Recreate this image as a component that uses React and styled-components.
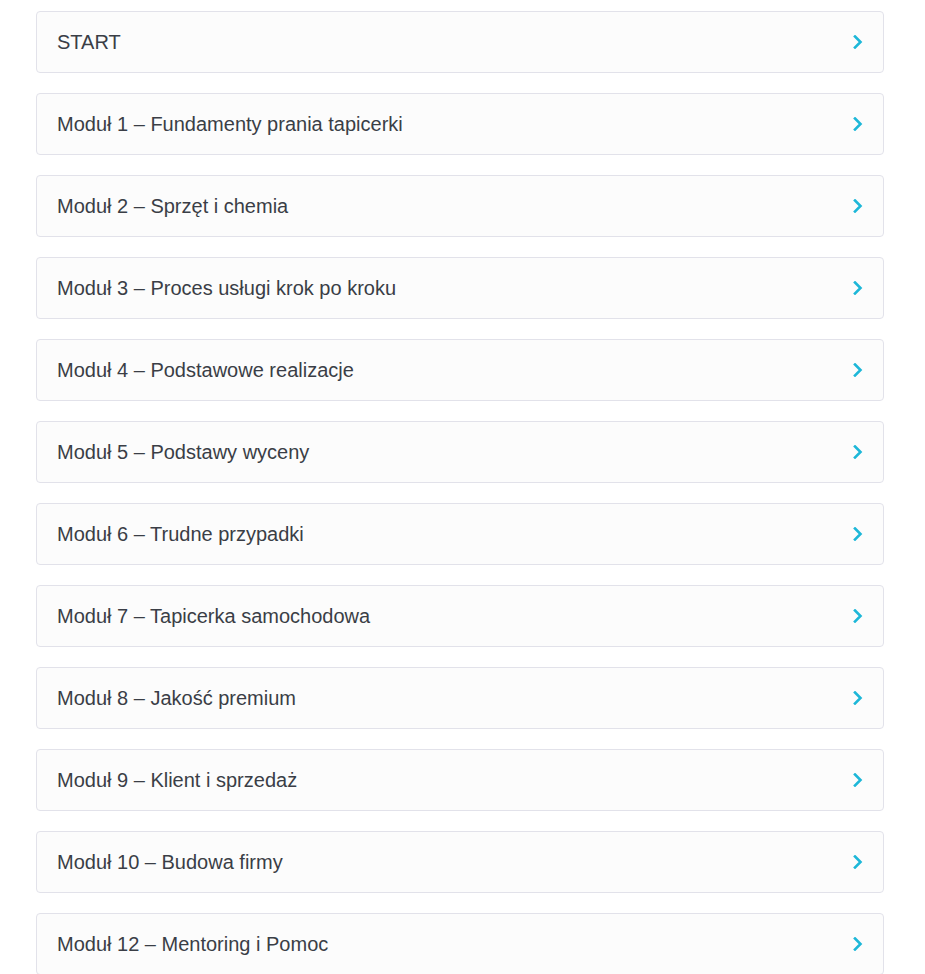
import React from "react";
import styled, { createGlobalStyle } from "styled-components";

const Global = createGlobalStyle`
  html, body { margin: 0; padding: 0; background: #ffffff; }
  body { font-family: "Liberation Sans", Arial, sans-serif; }
`;

const Page = styled.div`
  padding: 11px 41px 0 36px;
  display: flex;
  flex-direction: column;
  gap: 20px;
`;

const Card = styled.div`
  box-sizing: border-box;
  height: 62px;
  display: flex;
  align-items: center;
  justify-content: space-between;
  padding: 0 20px 0 20px;
  background: #fcfcfc;
  border: 1px solid #e2e2ea;
  border-radius: 4px;
  cursor: pointer;
`;

const Title = styled.span`
  font-size: 20px;
  color: #3a3e46;
`;

const Chevron = () => (
  <svg width="10" height="14" viewBox="0 0 10 14" aria-hidden="true">
    <path d="M2 1.5 L7.5 7 L2 12.5" fill="none" stroke="#1db7d8" strokeWidth="2.6" strokeLinecap="square" />
  </svg>
);

const items = [
  "START",
  "Moduł 1 – Fundamenty prania tapicerki",
  "Moduł 2 – Sprzęt i chemia",
  "Moduł 3 – Proces usługi krok po kroku",
  "Moduł 4 – Podstawowe realizacje",
  "Moduł 5 – Podstawy wyceny",
  "Moduł 6 – Trudne przypadki",
  "Moduł 7 – Tapicerka samochodowa",
  "Moduł 8 – Jakość premium",
  "Moduł 9 – Klient i sprzedaż",
  "Moduł 10 – Budowa firmy",
  "Moduł 12 – Mentoring i Pomoc",
];

export default function App() {
  return (
    <>
      <Global />
      <Page>
        {items.map((t) => (
          <Card key={t}>
            <Title>{t}</Title>
            <Chevron />
          </Card>
        ))}
      </Page>
    </>
  );
}
